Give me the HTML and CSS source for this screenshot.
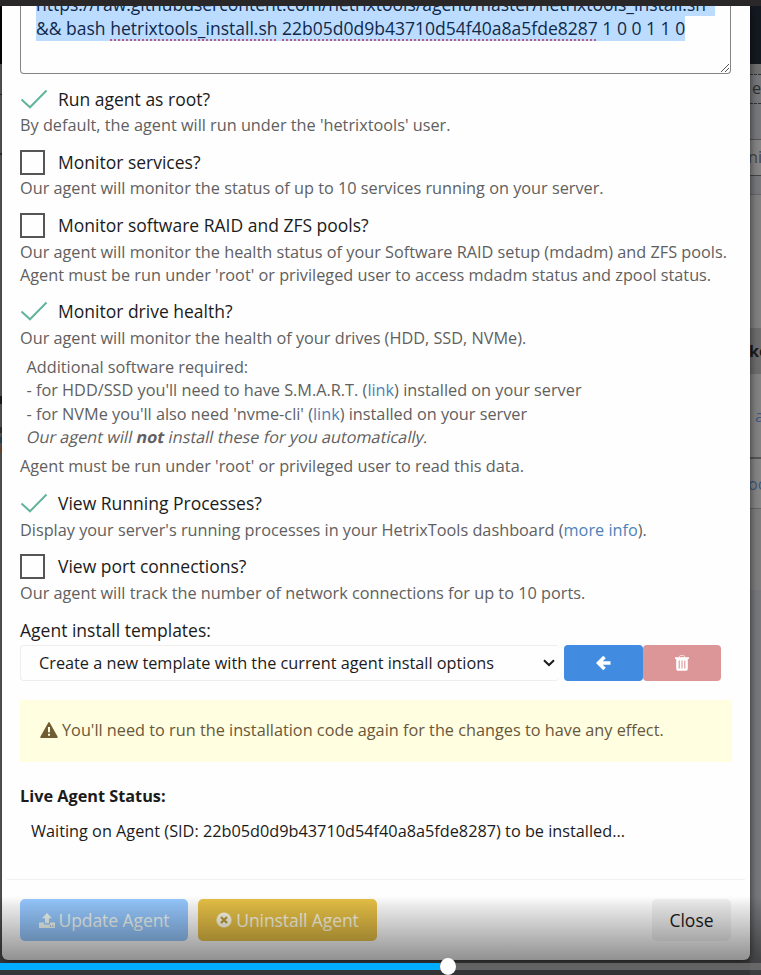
FILE: index.html
```html
<!DOCTYPE html>
<html lang="en">
<head>
<meta charset="utf-8">
<title>Agent install options</title>
<link rel="stylesheet" href="styles.css">
</head>
<body>
<svg class="defs" width="0" height="0"><defs><symbol id="check" viewBox="0 0 28 20"><path d="M1.5 10.5L10 18.3L26.5 1.5" fill="none" stroke="#62b49d" stroke-width="2"/></symbol></defs></svg>
<div class="screen">
  <div class="topbar"></div>
  <div class="stage">
    <aside class="edge edge-left">
      <div class="navy"></div><div class="l1"></div><div class="l2"></div><div class="l3"></div><div class="l4"></div><div class="l5"></div><div class="l6"></div><div class="l7"></div>
    </aside>
    <main class="modal">
      <div class="code">
        <div class="code-text c1"><span class="sel">https://raw.githubusercontent.com/hetrixtools/agent/master/hetrixtools_install.sh</span></div>
        <div class="code-text c2"><span class="sel">&amp;&amp; bash <span class="sp">hetrixtools_install.sh</span> <span class="sp">22b05d0d9b43710d54f40a8a5fde8287</span> 1 0 0 1 1 0</span></div>
        <svg class="grip" width="10" height="10" viewBox="0 0 10 10"><path d="M1 9L9 1M5 9L9 5" stroke="#555" fill="none"/></svg>
      </div>
      <section class="opt o1">
        <div class="label"><svg class="check"><use href="#check"/></svg><span>Run agent as root?</span></div>
        <p>By default, the agent will run under the 'hetrixtools' user.</p>
      </section>
      <section class="opt o2">
        <div class="label"><i class="box"></i><span>Monitor services?</span></div>
        <p>Our agent will monitor the status of up to 10 services running on your server.</p>
      </section>
      <section class="opt o3">
        <div class="label"><i class="box"></i><span>Monitor software RAID and ZFS pools?</span></div>
        <p>Our agent will monitor the health status of your Software RAID setup (mdadm) and ZFS pools.<br>Agent must be run under 'root' or privileged user to access mdadm status and zpool status.</p>
      </section>
      <section class="opt o4">
        <div class="label"><svg class="check"><use href="#check"/></svg><span>Monitor drive health?</span></div>
        <p>Our agent will monitor the health of your drives (HDD, SSD, NVMe).</p>
        <div class="extra">Additional software required:<br>- for HDD/SSD you'll need to have S.M.A.R.T. (<a>link</a>) installed on your server<br>- for NVMe you'll also need 'nvme-cli' (<a>link</a>) installed on your server<br><span class="slant">Our agent will <b>not</b> install these for you automatically.</span></div>
        <p>Agent must be run under 'root' or privileged user to read this data.</p>
      </section>
      <section class="opt o5">
        <div class="label"><svg class="check"><use href="#check"/></svg><span>View Running Processes?</span></div>
        <p>Display your server's running processes in your HetrixTools dashboard (<a>more info</a>).</p>
      </section>
      <section class="opt o6">
        <div class="label"><i class="box"></i><span>View port connections?</span></div>
        <p>Our agent will track the number of network connections for up to 10 ports.</p>
      </section>
      <div class="tpl-label">Agent install templates:</div>
      <div class="tpl">
        <div class="select"><span>Create a new template with the current agent install options</span><svg width="12" height="8" viewBox="0 0 12 8"><path d="M1 1.2L6 6L11 1.2" fill="none" stroke="#1c1c1c" stroke-width="2"/></svg></div>
        <button class="load"><svg width="15" height="16" viewBox="0 0 15 16"><path d="M8.5 2L2.5 8L8.5 14M3 8H14.5" fill="none" stroke="#fff" stroke-width="3.6"/></svg></button>
        <button class="del"><svg width="14" height="16" viewBox="0 0 14 16"><path d="M0 2.3H4L5 .3H9L10 2.3H14V4H0Z M1.2 4H12.8V14Q12.8 15.7 11.2 15.7H2.8Q1.2 15.7 1.2 14Z" fill="#fff"/><path d="M5.3 2.3L5.8 1.4H8.2L8.7 2.3M4.2 5.5V13.5M7 5.5V13.5M9.8 5.5V13.5" fill="none" stroke="#dc9697" stroke-width="1.1"/></svg></button>
      </div>
      <div class="warn"><svg width="18" height="16" viewBox="0 0 18 16"><path d="M9 .8L17 15.2H1Z" fill="#715d32" stroke="#715d32" stroke-width="1.5" stroke-linejoin="round"/><path d="M9 5V10.3M9 11.8V13.8" stroke="#fffee0" stroke-width="2"/></svg><span>You'll need to run the installation code again for the changes to have any effect.</span></div>
      <div class="status-title">Live Agent Status:</div>
      <div class="status">Waiting on Agent (SID: 22b05d0d9b43710d54f40a8a5fde8287) to be installed...</div>
      <footer>
        <button class="update"><svg width="16" height="15" viewBox="0 0 16 15"><path d="M8 0L13 5.3H10V10.3H6V5.3H3Z M0 9.5H5V11.5H11V9.5H16V15H0Z" fill="currentColor"/><path d="M10.8 13H12M13.2 13H14.4" stroke="#719fd2"/></svg><span>Update Agent</span></button>
        <button class="uninstall"><svg width="16" height="16" viewBox="0 0 16 16"><circle cx="8" cy="8" r="7.6" fill="currentColor"/><path d="M5 5L11 11M11 5L5 11" stroke="#bd9d3e" stroke-width="2.4"/></svg><span>Uninstall Agent</span></button>
        <button class="close">Close</button>
      </footer>
    </main>
    <aside class="edge edge-right">
      <div class="navy"></div><div class="r0"></div><div class="r1">e</div><div class="r2"></div><div class="r3">nit</div><div class="r4"></div><div class="r5"></div><div class="r6">ke</div><div class="r7">a</div><div class="r8">oc</div><div class="r9"></div>
    </aside>
  </div>
  <div class="shade"></div>
  <div class="player"><div class="played"></div><div class="thumb"></div></div>
</div>
</body>
</html>
```
FILE: styles.css
```css
*{box-sizing:border-box}
body{margin:0;font-family:"Open Sans",sans-serif;font-size:16.27px;color:#1b1b1b}
.defs{position:absolute}
.screen{position:relative;width:761px;height:975px;overflow:hidden;background:#66676a}
.topbar{height:6px;background:#292728;position:relative;z-index:3}
.stage{display:grid;grid-template-columns:2px 748px 11px;height:969px}
.edge{overflow:hidden;background:#77787b;display:flex;flex-direction:column}
.edge>div{flex:none;white-space:nowrap}
.navy{height:58px;background:#141a21}
.edge-left{background:#66676a}
.edge-left .navy{background:#020308}
.l1{height:31px;border-bottom:1px solid #333}.l2{height:60px;border-bottom:2px solid #333}
.l3{height:241px}.l4{height:8px;border:1px solid #222;margin-bottom:23px}.l5{height:6px;background:#383c3c;margin-bottom:4px}.l6{height:6px;background:#315365;margin-bottom:4px}.l7{height:6px;background:#8b5737}
.modal{position:relative;z-index:1;height:954px;background:#fefefe;border-radius:0 0 6px 6px;box-shadow:0 1px 9px rgba(0,0,0,.65);padding:0 18px;display:flex;flex-direction:column}
.code{position:relative;flex:none;width:711px;height:68px;border:1px solid #858585;border-top:0;border-radius:0 0 4px 4px;padding-left:15px;overflow:hidden}
.code-text{white-space:nowrap;font-size:17.52px;color:#10294a}
.c1{height:10px;line-height:24px;display:flex;align-items:flex-end}
.c1 .sel{display:block;width:679px;height:24px}
.c2{height:25px;line-height:25px}
.c2 .sel{display:inline-block;height:25px;width:649px}
.sel{background:#bbdcff}
.sp{text-decoration:underline dotted #bd5c82 2px;text-underline-offset:4px;text-decoration-skip-ink:none}
.grip{position:absolute;right:0;bottom:0}
.opt{flex:none;color:#606060}
.opt p{margin:0;line-height:23px;white-space:nowrap}
.label{display:flex;align-items:center;height:26px;font-size:17.5px;color:#1b1b1b;margin-bottom:2px}
.check{width:28px;height:20px;margin-right:10px}
.box{width:25px;height:25px;border:2px solid #555;margin-right:13px}
.opt{margin-top:12px}
.o4,.o6{margin-top:11px}
.o3 .label,.o4 .label,.o5 .label,.o6 .label{margin-bottom:3px}
a{color:#4d82b8}
.extra{margin:6px 0;padding-left:6.5px;line-height:23.3px;white-space:nowrap}
.slant{display:inline-block;transform:skewX(-12deg)}
.tpl-label{flex:none;height:26px;line-height:26px;margin-top:12px;font-size:17.5px}
.tpl{display:flex;flex:none;height:36px;margin-top:2px;width:701px}
.select{width:539px;border:1px solid #eee;border-right:0;border-radius:4px;padding:0 4px 0 18px;display:flex;align-items:center;justify-content:space-between;margin-right:5px;white-space:nowrap}
button{font:inherit;border:0;padding:0;display:flex;align-items:center;justify-content:center;border-radius:4px}
.load{width:79px;background:#418ce1}.del{width:78px;background:#dc9697}
.warn{flex:none;width:712px;height:62px;margin-top:19px;background:#fffee1;color:#69573a;display:flex;align-items:center;padding-left:20px;padding-bottom:2px;gap:4px;white-space:nowrap}
.status-title{flex:none;height:24px;line-height:24px;margin-top:22px;font-weight:700}
.status{flex:none;height:24px;line-height:24px;margin:11px 0 0 11px;white-space:nowrap}
footer{flex:none;border-top:1px solid #f1f1f1;margin:36px -13px 0;padding:19px 14px 0 13px;display:flex;font-size:17.5px}
footer button{height:42px;border-radius:5px;gap:4px;white-space:nowrap}
.update{width:168px;background:#96c8ff;color:#f2fbf6;font-weight:500}
.uninstall{width:179px;margin-left:10px;background:#e7c146;color:#fffbe6;font-weight:500}
.close{width:79px;margin-left:auto;background:#f1f1f1;color:#1b1b1b}
.update span,.uninstall span{letter-spacing:-.08px}
.r0{height:10px;background:#707070}.r1{height:30px;border:1px dashed #333;border-width:1px 0;color:#303030;padding-left:2px;line-height:26px}
.r2{height:36px;border-bottom:1px solid #555}
.r3{height:36px;background:#858585;border-bottom:1px solid #444;color:#444;line-height:34px;margin-left:-2px}
.r4{height:19px;border-bottom:1px solid #666}.r5{height:133px;background:#808080}
.r6{height:46px;background:#6d6d6d;font-weight:700;line-height:46px;margin-left:-1px}
.r7{height:85px;background:#828282;color:#3d587f;border-bottom:2px solid #555;line-height:84px;padding-left:5px}
.r8{height:50px;background:#858585;color:#3d587f;border-bottom:1px solid #666;line-height:50px;margin-left:-2px}
.r9{height:81px;background:#7d7d7d}
.shade{position:absolute;z-index:4;left:0;right:0;top:896px;bottom:0;background:linear-gradient(rgba(0,0,0,0),rgba(0,0,0,.09) 14%,rgba(0,0,0,.43) 81%,rgba(0,0,0,.5));pointer-events:none}
.player{position:absolute;z-index:5;left:0;top:963px;width:761px;height:7px;background:rgba(125,125,125,.65);display:flex;align-items:center}
.played{width:440px;height:7px;background:#00adff}
.thumb{width:16px;height:17px;flex:none;border-radius:50%;background:#fff}
```
